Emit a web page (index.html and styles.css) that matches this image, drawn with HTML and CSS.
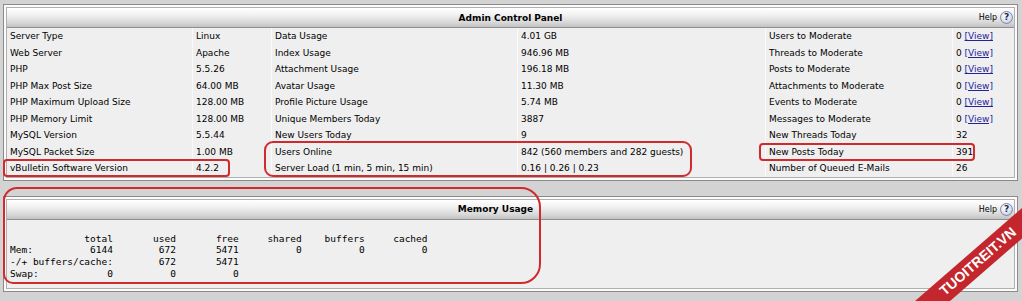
FILE: index.html
```html
<!DOCTYPE html>
<html>
<head>
<meta charset="utf-8">
<link rel="stylesheet" href="styles.css">
</head>
<body>
<div class="page">
  <div class="panel">
    <div class="panel-in">
      <div class="head">
        <span></span>
        <span class="title">Admin Control Panel</span>
        <span class="help">Help <span class="q">?</span></span>
      </div>
      <div class="grid">
        <div class="c">Server Type</div><div class="c">Linux</div><div class="c">Data Usage</div><div class="c">4.01 GB</div><div class="c">Users to Moderate</div><div class="c">0 <a class="v">[View]</a></div>
        <div class="c">Web Server</div><div class="c">Apache</div><div class="c">Index Usage</div><div class="c">946.96 MB</div><div class="c">Threads to Moderate</div><div class="c">0 <a class="v">[View]</a></div>
        <div class="c">PHP</div><div class="c">5.5.26</div><div class="c">Attachment Usage</div><div class="c">196.18 MB</div><div class="c">Posts to Moderate</div><div class="c">0 <a class="v">[View]</a></div>
        <div class="c">PHP Max Post Size</div><div class="c">64.00 MB</div><div class="c">Avatar Usage</div><div class="c">11.30 MB</div><div class="c">Attachments to Moderate</div><div class="c">0 <a class="v">[View]</a></div>
        <div class="c">PHP Maximum Upload Size</div><div class="c">128.00 MB</div><div class="c">Profile Picture Usage</div><div class="c">5.74 MB</div><div class="c">Events to Moderate</div><div class="c">0 <a class="v">[View]</a></div>
        <div class="c">PHP Memory Limit</div><div class="c">128.00 MB</div><div class="c">Unique Members Today</div><div class="c">3887</div><div class="c">Messages to Moderate</div><div class="c">0 <a class="v">[View]</a></div>
        <div class="c">MySQL Version</div><div class="c">5.5.44</div><div class="c">New Users Today</div><div class="c">9</div><div class="c">New Threads Today</div><div class="c">32</div>
        <div class="c">MySQL Packet Size</div><div class="c">1.00 MB</div><div class="c">Users Online</div><div class="c">842 (560 members and 282 guests)</div><div class="c">New Posts Today</div><div class="c">391</div>
        <div class="c">vBulletin Software Version</div><div class="c">4.2.2</div><div class="c">Server Load (1 min, 5 min, 15 min)</div><div class="c">0.16 | 0.26 | 0.23</div><div class="c">Number of Queued E-Mails</div><div class="c">26</div>
      </div>
    </div>
  </div>

  <div class="panel mem">
    <div class="panel-in">
      <div class="head">
        <span></span>
        <span class="title">Memory Usage</span>
        <span class="help">Help <span class="q">?</span></span>
      </div>
      <div class="membody">
<pre class="pre">             total       used       free     shared    buffers     cached
Mem:          6144        672       5471          0          0          0
-/+ buffers/cache:        672       5471
Swap:            0          0          0</pre>
      </div>
    </div>
  </div>

  <div class="ann a1"></div>
  <div class="ann a2"></div>
  <div class="ann a3"></div>
  <div class="ann a4"></div>
  <div class="ribbon">TUOITREIT.VN</div>
</div>
</body>
</html>
```

FILE: styles.css
```css
html, body {
  margin: 0;
  padding: 0;
  background: #d3d3d3;
  overflow: hidden;
}
.page {
  position: relative;
  width: 1022px;
  height: 301px;
  padding: 4px 4px 0 3px;
  box-sizing: border-box;
  font-family: "DejaVu Sans", Verdana, sans-serif;
  font-size: 9px;
  color: #000;
  overflow: hidden;
}
.panel {
  border: 1px solid #8a8a8a;
  background: #fbfbfb;
  padding: 2px;
}
.panel-in {
  border: 1px solid #b0b0b0;
  background: #efefef;
}
.head {
  display: grid;
  grid-template-columns: 1fr auto 1fr;
  align-items: center;
  height: 19px;
  background: linear-gradient(#ffffff 0%, #f2f2f2 35%, #d9d9d9 75%, #c2c2c2 100%);
  border-bottom: 1px solid #8e8e8e;
}
.title {
  font-weight: bold;
  font-size: 9px;
}
.mem .title {
  margin-right: 30px;
}
.help {
  justify-self: end;
  display: flex;
  align-items: center;
  gap: 3px;
  font-size: 8px;
  padding-right: 1px;
}
.q {
  display: inline-flex;
  align-items: center;
  justify-content: center;
  width: 13px;
  height: 13px;
  box-sizing: border-box;
  border-radius: 50%;
  border: 1px solid #7b8aa8;
  background: radial-gradient(circle at 40% 35%, #ffffff 0%, #dfe6f2 50%, #a9b6cf 100%);
  color: #1d2a55;
  font-weight: bold;
  font-size: 9px;
  line-height: 1;
}
.grid {
  display: grid;
  grid-template-columns: 185px 78px 245px 247px 186px 1fr;
  column-gap: 1px;
  background: #fafafa;
}
.c {
  background: #efefef;
  height: 15.5px;
  line-height: 15.5px;
  padding: 1px 0 0 3px;
  white-space: nowrap;
}
.v {
  color: #22229c;
  text-decoration: underline;
}
.mem {
  margin-top: 15px;
}
.membody {
  height: 68px;
  padding: 13px 0 0 3px;
  box-sizing: border-box;
}
.pre {
  margin: 0;
  font-family: "DejaVu Sans Mono", monospace;
  font-size: 9.5px;
  line-height: 11.7px;
  color: #000;
}
.ann {
  position: absolute;
  border: 2px solid #d02a2e;
  box-sizing: border-box;
}
.a1 { left: 3px; top: 159px; width: 227px; height: 18px; border-radius: 4px; }
.a2 { left: 264px; top: 141px; width: 428px; height: 36px; border-radius: 9px; }
.a3 { left: 759px; top: 143px; width: 216px; height: 18px; border-radius: 4px; }
.a4 { left: 3px; top: 187px; width: 538px; height: 97px; border-radius: 14px 20px 20px 10px; }
.ribbon {
  position: absolute;
  left: 880px;
  top: 250px;
  width: 196px;
  height: 23px;
  line-height: 23px;
  background: #c3272d;
  color: #fff;
  font-family: "Liberation Sans", Arial, sans-serif;
  font-weight: bold;
  font-size: 14px;
  text-align: center;
  transform: rotate(-41deg);
}
```
